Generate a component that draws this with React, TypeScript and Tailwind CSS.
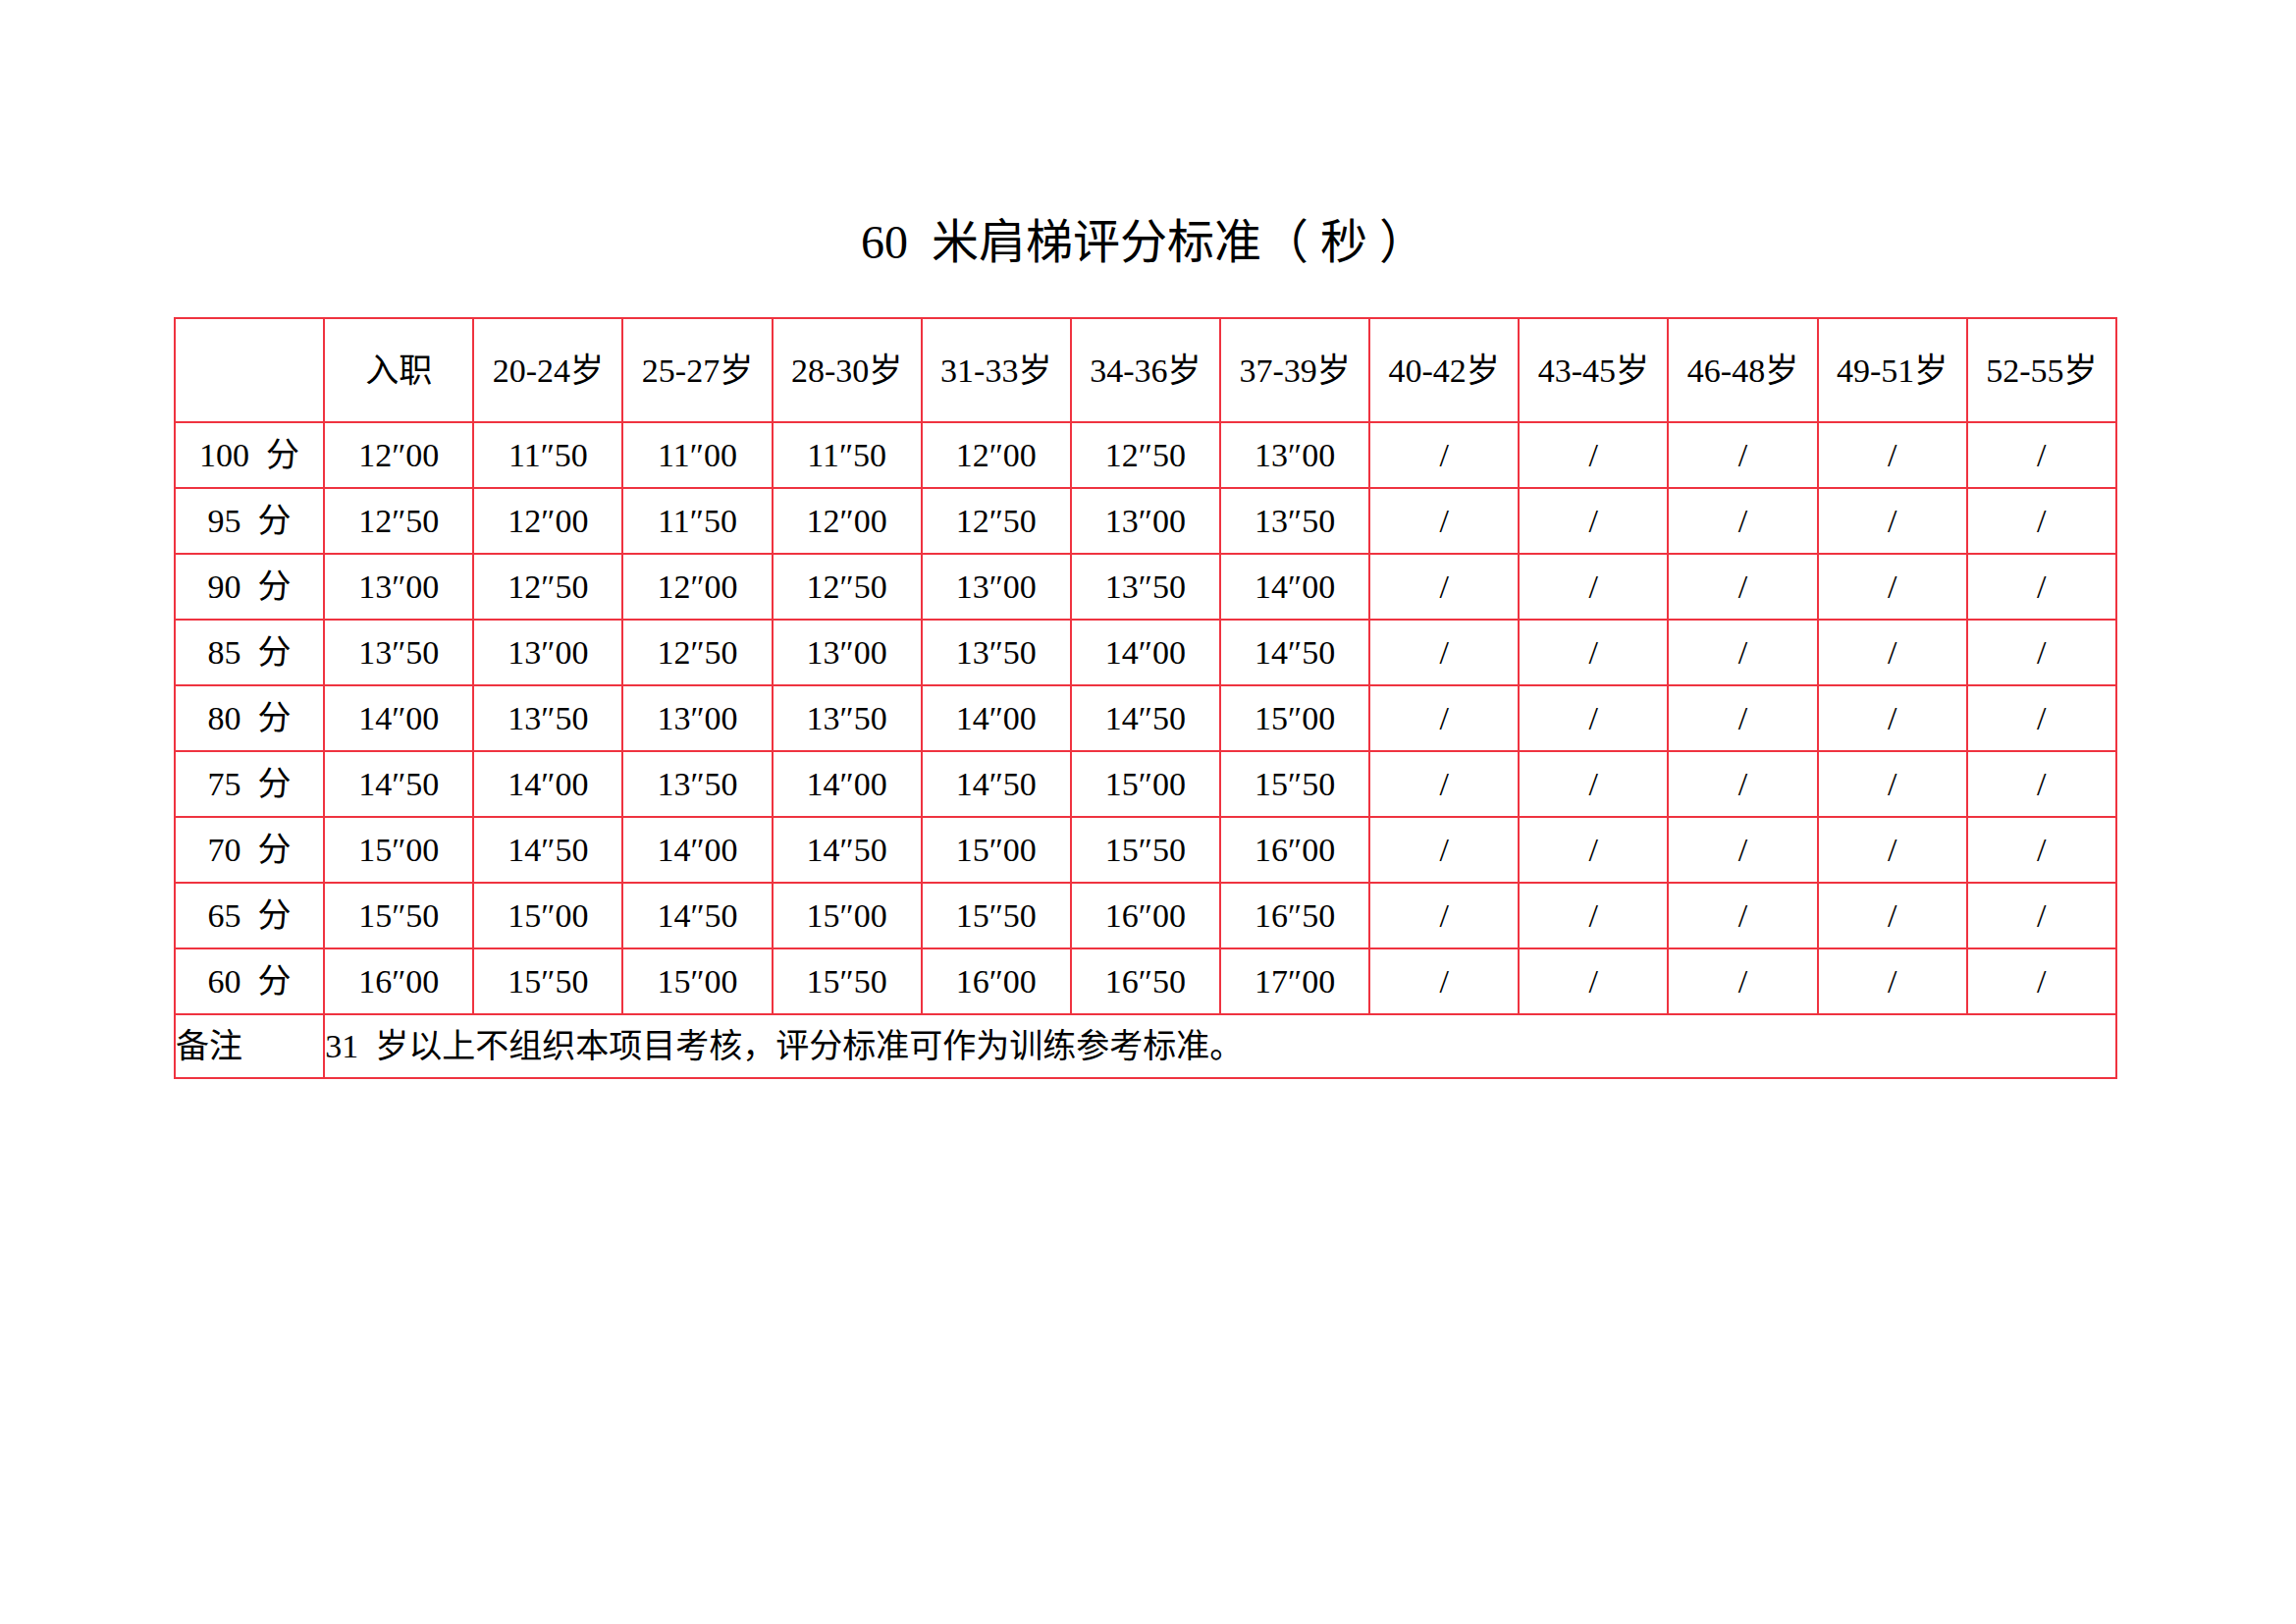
const headers = ["", "入职", "20-24岁", "25-27岁", "28-30岁", "31-33岁", "34-36岁", "37-39岁", "40-42岁", "43-45岁", "46-48岁", "49-51岁", "52-55岁"];

const rows: [string, string[]][] = [
  ["100", ["12″00", "11″50", "11″00", "11″50", "12″00", "12″50", "13″00"]],
  ["95", ["12″50", "12″00", "11″50", "12″00", "12″50", "13″00", "13″50"]],
  ["90", ["13″00", "12″50", "12″00", "12″50", "13″00", "13″50", "14″00"]],
  ["85", ["13″50", "13″00", "12″50", "13″00", "13″50", "14″00", "14″50"]],
  ["80", ["14″00", "13″50", "13″00", "13″50", "14″00", "14″50", "15″00"]],
  ["75", ["14″50", "14″00", "13″50", "14″00", "14″50", "15″00", "15″50"]],
  ["70", ["15″00", "14″50", "14″00", "14″50", "15″00", "15″50", "16″00"]],
  ["65", ["15″50", "15″00", "14″50", "15″00", "15″50", "16″00", "16″50"]],
  ["60", ["16″00", "15″50", "15″00", "15″50", "16″00", "16″50", "17″00"]],
];

const cell = "border-2 border-[#ef3340] p-0 text-center align-middle";

export default function App() {
  return (
    <div className="min-h-screen w-full bg-white pt-[200px] text-black [font-family:'Liberation_Serif','Noto_Sans_CJK_SC',serif]">
      {/* Title */}
      <div className="ml-[177px] w-[1980px] pr-[4px] text-center text-[48px] leading-[94px]">
        60&nbsp; 米肩梯评分标准（ 秒 ）
      </div>

      <table className="mt-[29px] ml-[177px] w-[1980px] table-fixed border-collapse text-[34px]">
        <thead>
          <tr className="h-[106px]">
            {headers.map((h, i) => (
              <th key={i} className={`${cell} font-normal`}>
                {h}
              </th>
            ))}
          </tr>
        </thead>
        <tbody>
          {rows.map(([score, vals]) => (
            <tr key={score} className="h-[67px]">
              <td className={cell}>
                {score}&nbsp; 分
              </td>
              {vals.map((v, i) => (
                <td key={i} className={cell}>
                  {v}
                </td>
              ))}
              {[0, 1, 2, 3, 4].map((i) => (
                <td key={`s${i}`} className={cell}>
                  /
                </td>
              ))}
            </tr>
          ))}
          <tr className="h-[65px]">
            <td className={`${cell} text-left`}>备注</td>
            <td colSpan={12} className={`${cell} text-left`}>
              31&nbsp; 岁以上不组织本项目考核，评分标准可作为训练参考标准。
            </td>
          </tr>
        </tbody>
      </table>
    </div>
  );
}
